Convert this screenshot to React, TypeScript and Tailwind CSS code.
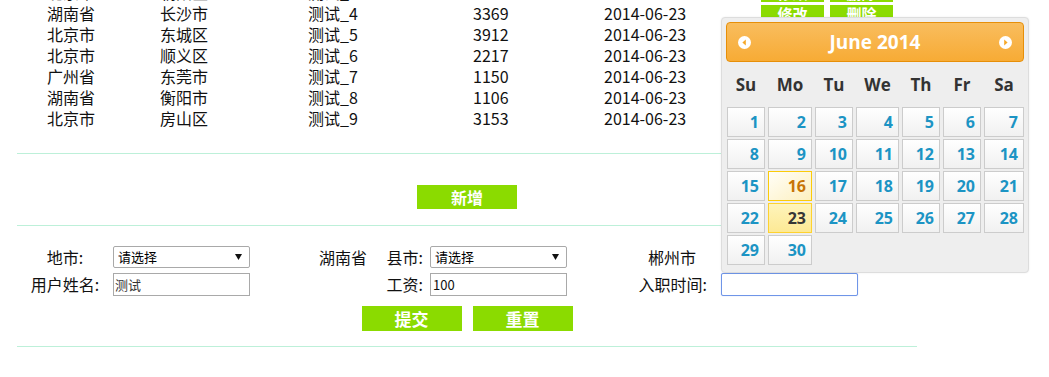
import React from "react";

const rows: string[][] = [
  ["北京市", "朝阳区", "测试_3", "2561", "2014-06-23"],
  ["湖南省", "长沙市", "测试_4", "3369", "2014-06-23"],
  ["北京市", "东城区", "测试_5", "3912", "2014-06-23"],
  ["北京市", "顺义区", "测试_6", "2217", "2014-06-23"],
  ["广州省", "东莞市", "测试_7", "1150", "2014-06-23"],
  ["湖南省", "衡阳市", "测试_8", "1106", "2014-06-23"],
  ["北京市", "房山区", "测试_9", "3153", "2014-06-23"],
];

const weeks: (number | null)[][] = [
  [1, 2, 3, 4, 5, 6, 7],
  [8, 9, 10, 11, 12, 13, 14],
  [15, 16, 17, 18, 19, 20, 21],
  [22, 23, 24, 25, 26, 27, 28],
  [29, 30, null, null, null, null, null],
];

const dayNames = ["Su", "Mo", "Tu", "We", "Th", "Fr", "Sa"];

function FakeSelect() {
  return (
    <div className="flex h-[22px] w-[137px] items-center justify-between rounded-[2px] border border-[#a9a9a9] bg-white pl-[4px] pr-[7px] text-[13px] leading-[20px] text-black">
      <span>请选择</span>
      <svg width="7" height="6" viewBox="0 0 7 6">
        <polygon points="0,0 7,0 3.5,6" fill="#111" />
      </svg>
    </div>
  );
}

function CircleArrow({ dir }: { dir: "left" | "right" }) {
  return (
    <svg width="13" height="13" viewBox="0 0 13 13">
      <circle cx="6.5" cy="6.5" r="6.5" fill="#ffffff" />
      {dir === "left" ? (
        <polygon points="7.8,3.6 7.8,9.4 4.4,6.5" fill="#f6a828" />
      ) : (
        <polygon points="5.2,3.6 5.2,9.4 8.6,6.5" fill="#f6a828" />
      )}
    </svg>
  );
}

function DayCell({ d }: { d: number }) {
  let cls =
    "border-[#cccccc] bg-[linear-gradient(to_bottom,#ffffff,#f1f1f1)] text-[#1c94c4]";
  if (d === 16)
    cls =
      "border-[#fbcb09] bg-[linear-gradient(to_bottom_right,#fffef8,#fdf0c0)] text-[#c77405]";
  if (d === 23)
    cls =
      "border-[#fed22f] bg-[linear-gradient(to_bottom,#fef4bb,#fde995)] text-[#363636]";
  return (
    <div
      className={`flex h-[30px] items-center justify-end border pr-[5px] text-[16px] font-bold leading-[28px] ${cls}`}
    >
      {d}
    </div>
  );
}

export default function App() {
  return (
    <div className="relative h-[377px] w-[1049px] overflow-hidden bg-white font-['Noto_Sans_CJK_SC','Noto_Sans',sans-serif] text-[16px] text-[#111]">
      <div className="ml-[17px] flex w-[900px] flex-col">
        {/* data rows */}
        <div className="-mt-[18px] flex flex-col">
          {rows.map((r, i) => (
            <div key={i} className="flex h-[21px] items-center pl-[30px] leading-[21px]">
              <span className="w-[113px]">{r[0]}</span>
              <span className="w-[148px]">{r[1]}</span>
              <span className="w-[165px]">{r[2]}</span>
              <span className="w-[131px]">{r[3]}</span>
              <span className="w-[157px]">{r[4]}</span>
              <span className="flex h-[18px] w-[63px] items-center justify-center bg-[#8bdb00] text-[15px] font-bold text-white">
                修改
              </span>
              <span className="ml-[6px] flex h-[18px] w-[63px] items-center justify-center bg-[#8bdb00] text-[15px] font-bold text-white">
                删除
              </span>
            </div>
          ))}
        </div>

        <div className="mt-[24px] h-px bg-[#bdf0d9]" />

        <div className="mt-[31px] flex justify-center">
          <div className="flex h-[24px] w-[100px] items-center justify-center bg-[#8bdb00] text-[16px] font-bold text-white">
            新增
          </div>
        </div>

        <div className="mt-[16px] h-px bg-[#bdf0d9]" />

        {/* form row 1 */}
        <div className="mt-[20px] flex h-[22px] items-center leading-[22px]">
          <span className="w-[96px] text-center">地市:</span>
          <FakeSelect />
          <span className="w-[117px] text-right">湖南省</span>
          <span className="w-[63px] pr-[7px] text-right">县市:</span>
          <FakeSelect />
          <span className="w-[142px] pr-[13px] text-right">郴州市</span>
        </div>

        {/* form row 2 */}
        <div className="mt-[5px] flex h-[23px] items-center leading-[23px]">
          <span className="w-[96px] text-center">用户姓名:</span>
          <div className="flex h-[23px] w-[137px] items-center border border-[#a9a9a9] bg-white pl-[1px] text-[13px] leading-[21px] text-[#333]">
            测试
          </div>
          <span className="w-[117px]" />
          <span className="w-[63px] pr-[7px] text-right">工资:</span>
          <div className="flex h-[23px] w-[137px] items-center border border-[#a9a9a9] bg-white pl-[2px] text-[13px] leading-[21px] text-[#111]">
            100
          </div>
          <span className="w-[140px] text-right">入职时间:</span>
          <div className="ml-[14px] h-[23px] w-[137px] rounded-[2px] border border-[#6f95e8] bg-white shadow-[0_0_1px_rgba(80,120,230,0.5)]" />
        </div>

        <div className="mt-[10px] flex justify-center gap-[11px]">
          <div className="flex h-[25px] w-[100px] items-center justify-center bg-[#8bdb00] text-[17px] font-bold text-white">
            提交
          </div>
          <div className="flex h-[25px] w-[100px] items-center justify-center bg-[#8bdb00] text-[17px] font-bold text-white">
            重置
          </div>
        </div>

        <div className="mt-[15px] h-px bg-[#bdf0d9]" />
      </div>

      {/* datepicker popup */}
      <div className="absolute left-[721px] top-[17px] flex h-[256px] w-[308px] flex-col rounded-[4px] border border-[#dddddd] bg-[#eeeeee] p-[4px] font-['Open_Sans','Noto_Sans',sans-serif] shadow-[0_0_2px_rgba(0,0,0,0.08)]">
        <div className="flex h-[40px] items-center justify-between rounded-[4px] border border-[#e78f08] bg-[linear-gradient(to_bottom,#f9bd5e,#f7ab35)] px-[11px]">
          <CircleArrow dir="left" />
          <span className="text-[19px] font-bold leading-[24px] text-white">June 2014</span>
          <CircleArrow dir="right" />
        </div>
        <div className="ml-[1px] grid h-[45px] grid-cols-[38px_44px_38px_43px_38px_38px_40px] items-center gap-x-[3px] text-center text-[17px] font-bold text-[#333333]">
          {dayNames.map((n) => (
            <span key={n}>{n}</span>
          ))}
        </div>
        <div className="ml-[1px] grid grid-cols-[38px_44px_38px_43px_38px_38px_40px] gap-x-[3px] gap-y-[2px]">
          {weeks.flat().map((d, i) =>
            d === null ? <div key={i} className="h-[30px]" /> : <DayCell key={i} d={d} />
          )}
        </div>
      </div>
    </div>
  );
}
